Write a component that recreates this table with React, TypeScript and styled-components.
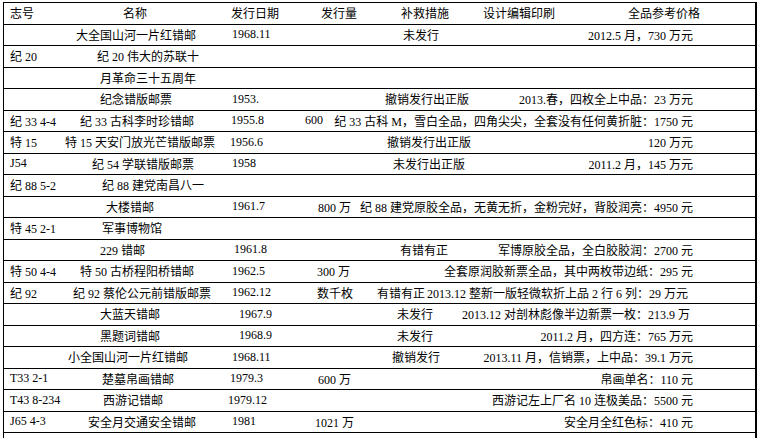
import React from 'react';
import styled, { createGlobalStyle } from 'styled-components';

const GlobalStyle = createGlobalStyle`
  html, body {
    margin: 0;
    padding: 0;
    background: #ffffff;
    overflow: hidden;
  }
  body {
    font-family: 'Liberation Serif', 'Noto Sans CJK SC', serif;
    font-size: 12px;
    color: #000000;
  }
`;

const Page = styled.div`
  width: 760px;
  height: 438px;
  padding: 2px 0 0 3px;
  box-sizing: border-box;
  overflow: hidden;
`;

const Table = styled.div`
  width: 754px;
  border-top: 1px solid #000;
  border-left: 1px solid #000;
  border-right: 2px solid #000;
  box-sizing: border-box;
`;

const Row = styled.div<{ $last?: boolean }>`
  display: flex;
  align-items: center;
  height: 21.5px;
  box-sizing: border-box;
  border-bottom: ${(p) => (p.$last ? 'none' : '1px solid #000')};
  white-space: nowrap;
`;

const Cell = styled.span<{ $w: number; $indent?: number }>`
  flex: 0 0 ${(p) => p.$w}px;
  padding-left: ${(p) => p.$indent || 0}px;
  box-sizing: border-box;
  overflow: visible;
`;

const Tail = styled.div<{ $end: number }>`
  flex: 1;
  display: flex;
  align-items: center;
  min-width: 0;
  padding-right: ${(p) => 755 - p.$end}px;
`;

const Slot = styled.span<{ $w: number; $indent?: number; $fixed?: boolean }>`
  flex: 0 ${(p) => (p.$fixed ? 0 : 1)} ${(p) => p.$w}px;
  padding-left: ${(p) => p.$indent || 0}px;
  box-sizing: border-box;
`;

const Price = styled.span`
  flex: 1 0 auto;
  text-align: right;
`;

type Item = {
  code?: string;
  name?: string;
  ni?: number;
  date?: string;
  di?: number;
  qty?: string;
  qi?: number;
  remedy?: string;
  ri?: number;
  design?: string;
  price?: string;
  end?: number;
};

const header: Item = {
  code: '志号',
  name: '名称',
  ni: 61,
  date: '发行日期',
  di: 5,
  qty: '发行量',
  qi: 21,
  remedy: '补救措施',
  ri: 26,
  design: '设计编辑印刷',
  price: '全品参考价格',
  end: 700,
};

const rows: Item[] = [
  { name: '大全国山河一片红错邮', ni: 14, date: '1968.11', di: 6, remedy: '未发行', ri: 28, price: '2012.5 月，730 万元' },
  { code: '纪 20', name: '纪 20 伟大的苏联十', ni: 35 },
  { name: '月革命三十五周年', ni: 38 },
  { name: '纪念错版邮票', ni: 38, date: '1953.', di: 6, remedy: '撤销发行出正版', ri: 10, price: '2013.春，四枚全上中品：23 万元' },
  { code: '纪 33 4-4', name: '纪 33 古科李时珍错邮', ni: 18, date: '1955.8', di: 5, qty: '600', qi: 5, price: '纪 33 古科 M，雪白全品，四角尖尖，全套没有任何黄折脏：1750 元' },
  { code: '特 15', name: '特 15 天安门放光芒错版邮票', ni: 3, date: '1956.6', di: 4, remedy: '撤销发行出正版', ri: 12, price: '120 万元' },
  { code: 'J54', name: '纪 54 学联错版邮票', ni: 30, date: '1958', di: 6, remedy: '未发行出正版', ri: 18, price: '2011.2 月，145 万元' },
  { code: '纪 88 5-2', name: '纪 88 建党南昌八一', ni: 40 },
  { name: '大楼错邮', ni: 44, date: '1961.7', di: 6, qty: '800 万', qi: 18, price: '纪 88 建党原胶全品，无黄无折，金粉完好，背胶润亮：4950 元' },
  { code: '特 45 2-1', name: '军事博物馆', ni: 40 },
  { name: '229 错邮', ni: 38, date: '1961.8', di: 8, remedy: '有错有正', ri: 25, price: '军博原胶全品，全白胶胶润：2700 元' },
  { code: '特 50 4-4', name: '特 50 古桥程阳桥错邮', ni: 18, date: '1962.5', di: 6, qty: '300 万', qi: 17, price: '全套原润胶新票全品，其中两枚带边纸：295 元' },
  { code: '纪 92', name: '纪 92 蔡伦公元前错版邮票', ni: 11, date: '1962.12', di: 6, qty: '数千枚', qi: 17, remedy: '有错有正', ri: 2, price: '2013.12 整新一版轻微软折上品 2 行 6 列：29 万元', end: 688 },
  { name: '大蓝天错邮', ni: 38, date: '1967.9', di: 13, remedy: '未发行', ri: 22, price: '2013.12 对剖林彪像半边新票一枚：213.9 万', end: 690 },
  { name: '黑题词错邮', ni: 38, date: '1968.9', di: 13, remedy: '未发行', ri: 22, price: '2011.2 月，四方连：765 万元' },
  { name: '小全国山河一片红错邮', ni: 6, date: '1968.11', di: 6, remedy: '撤销发行', ri: 17, price: '2013.11 月，信销票，上中品：39.1 万元' },
  { code: 'T33 2-1', name: '楚墓帛画错邮', ni: 40, date: '1979.3', di: 4, qty: '600 万', qi: 18, price: '帛画单名：110 元' },
  { code: 'T43 8-234', name: '西游记错邮', ni: 41, date: '1979.12', di: 2, price: '西游记左上厂名 10 连极美品：5500 元' },
  { code: 'J65 4-3', name: '安全月交通安全错邮', ni: 26, date: '1981', di: 6, qty: '1021 万', qi: 15, price: '安全月全红色标：410 元' },
];

function StampRow({ item, last }: { item: Item; last?: boolean }) {
  return (
    <Row $last={last}>
      <Cell $w={58} $indent={6}>{item.code}</Cell>
      <Cell $w={164} $indent={item.ni}>{item.name}</Cell>
      <Cell $w={74} $indent={item.di}>{item.date}</Cell>
      <Tail $end={item.end || 693}>
        <Slot $w={75} $indent={item.qi} $fixed={!!item.remedy}>
          {item.qty}
        </Slot>
        {item.remedy && (
          <Slot $w={105} $indent={item.ri}>{item.remedy}</Slot>
        )}
        {item.design && (
          <Slot $w={80} $indent={3}>{item.design}</Slot>
        )}
        <Price>{item.price}</Price>
      </Tail>
    </Row>
  );
}

export default function App() {
  return (
    <>
      <GlobalStyle />
      <Page>
        <Table>
          <StampRow item={header} />
          {rows.map((item, idx) => (
            <StampRow item={item} key={idx} />
          ))}
          <StampRow item={{}} last />
        </Table>
      </Page>
    </>
  );
}
